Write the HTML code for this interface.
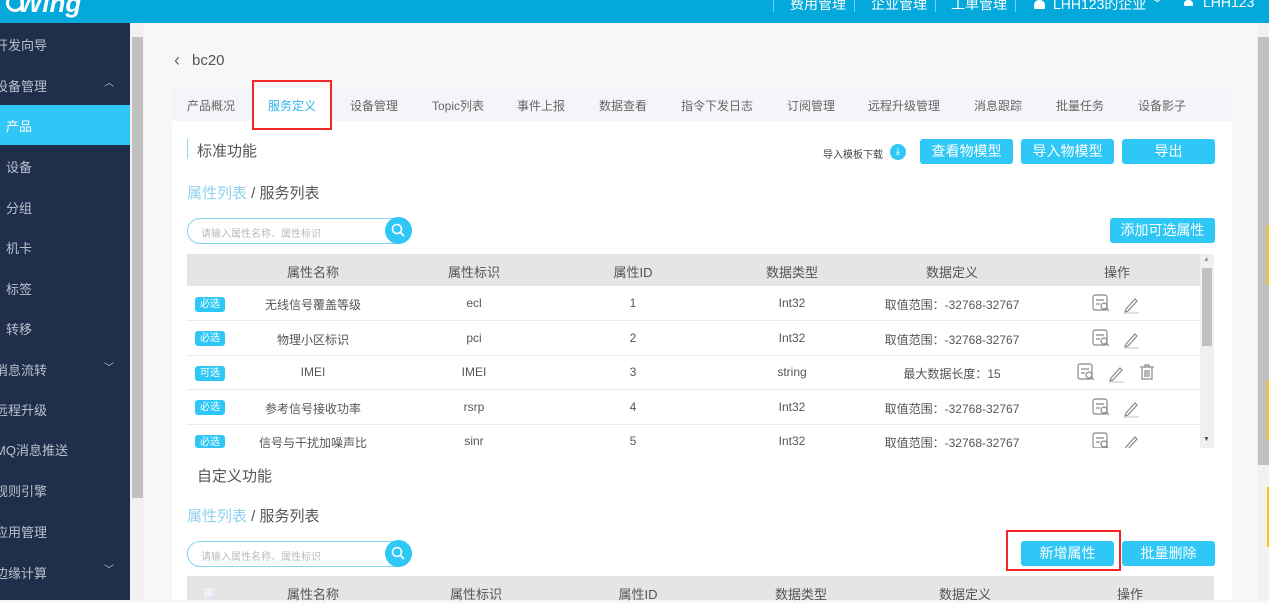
<!DOCTYPE html><html><head><meta charset="utf-8"><style>
*{margin:0;padding:0;box-sizing:border-box}
body{width:1269px;height:600px;overflow:hidden;position:relative;background:#f7f7f7;font-family:"Liberation Sans","Noto Sans CJK SC",sans-serif;color:#555;font-size:13px}
.a{position:absolute}
.hdr{left:0;top:0;width:1269px;height:23px;background:#04a9dc}
.hn{top:-6px;color:#fff;font-size:14px;white-space:nowrap}
.sep{top:0;width:1px;height:12px;background:#6fd0ee}
.side{left:0;top:23px;width:130px;height:577px;background:#1f2e4a}
.si{color:#b8c0cc;font-size:13px;white-space:nowrap}
.btn{background:#2fc7f5;color:#fff;border-radius:3px;text-align:center;font-size:14px}
.tc{text-align:center;white-space:nowrap;transform:translateX(-50%)}
.badge{background:#2fc7f5;color:#fff;font-size:10px;border-radius:3px;width:30px;height:15px;line-height:15px;text-align:center}
.row{left:187px;width:1013px;height:1px;background:#e8ebf0}
.red{border:2px solid #f0282a}
</style></head><body>
<div class="a hdr"></div>
<div class="a" style="left:18px;top:-12px;color:#fff;font-size:26px;font-style:italic;font-weight:bold">Wing</div>
<div class="a" style="left:6px;top:-6px;width:18px;height:18px;border:3px solid #fff;border-top-color:transparent;border-radius:50%"></div>
<div class="a sep" style="left:773px"></div><div class="a hn" style="left:790px">费用管理</div>
<div class="a sep" style="left:854px"></div><div class="a hn" style="left:871px">企业管理</div>
<div class="a sep" style="left:935px"></div><div class="a hn" style="left:951px">工单管理</div>
<div class="a sep" style="left:1015px"></div>
<div class="a" style="left:1034px;top:0;width:11px;height:9px;background:#fff;border-radius:5px 5px 1px 1px"></div>
<div class="a hn" style="left:1053px">LHH123的企业 ﹀</div>
<div class="a" style="left:1184px;top:0;width:9px;height:6px;background:#fff;border-radius:4px 4px 1px 1px"></div>
<div class="a hn" style="left:1203px">LHH123</div>

<div class="a side"></div>
<div class="a si" style="left:-5px;top:35px">开发向导</div>
<div class="a si" style="left:-5px;top:76px">设备管理</div><div class="a si" style="left:104px;top:74px;font-size:10px">︿</div>
<div class="a" style="left:0;top:105px;width:130px;height:40px;background:#2fc7f5"></div>
<div class="a" style="left:6px;top:116px;color:#fff">产品</div>
<div class="a si" style="left:6px;top:157px">设备</div>
<div class="a si" style="left:6px;top:198px">分组</div>
<div class="a si" style="left:6px;top:238px">机卡</div>
<div class="a si" style="left:6px;top:279px">标签</div>
<div class="a si" style="left:6px;top:319px">转移</div>
<div class="a si" style="left:-5px;top:360px">消息流转</div><div class="a si" style="left:104px;top:359px;font-size:10px">﹀</div>
<div class="a si" style="left:-5px;top:400px">远程升级</div>
<div class="a si" style="left:-5px;top:440px">MQ消息推送</div>
<div class="a si" style="left:-5px;top:481px">规则引擎</div>
<div class="a si" style="left:-5px;top:522px">应用管理</div>
<div class="a si" style="left:-5px;top:563px">边缘计算</div><div class="a si" style="left:104px;top:561px;font-size:10px">﹀</div>
<div class="a" style="left:130px;top:23px;width:14px;height:577px;background:#f1f1f1"></div>
<div class="a" style="left:132px;top:37px;width:11px;height:461px;background:#c1c1c1"></div>
<div class="a" style="left:1257px;top:23px;width:12px;height:577px;background:#f1f1f1"></div>
<div class="a" style="left:1258px;top:37px;width:11px;height:428px;background:#c1c1c1"></div>
<div class="a" style="left:1267px;top:225px;width:2px;height:60px;background:#f5c518"></div>
<div class="a" style="left:1267px;top:380px;width:2px;height:60px;background:#f5c518"></div>
<div class="a" style="left:1267px;top:487px;width:2px;height:60px;background:#f5c518"></div>

<div class="a" style="left:174px;top:50px;font-size:18px;color:#666">‹</div>
<div class="a" style="left:192px;top:52px;font-size:15px;color:#555">bc20</div>
<div class="a" style="left:172px;top:88px;width:1060px;height:33px;background:#f4f5f8"></div>
<div class="a" style="left:172px;top:121px;width:1060px;height:479px;background:#fff"></div>
<div class="a" style="left:253px;top:88px;width:78px;height:33px;background:#fff"></div>
<div class="a red" style="left:252px;top:80px;width:80px;height:50px"></div>
<div class="a" style="left:187px;top:97px;font-size:12px;color:#666">产品概况</div>
<div class="a" style="left:268px;top:97px;font-size:12px;color:#2fb4ec">服务定义</div>
<div class="a" style="left:350px;top:97px;font-size:12px;color:#666">设备管理</div>
<div class="a" style="left:432px;top:97px;font-size:12px;color:#666">Topic列表</div>
<div class="a" style="left:517px;top:97px;font-size:12px;color:#666">事件上报</div>
<div class="a" style="left:599px;top:97px;font-size:12px;color:#666">数据查看</div>
<div class="a" style="left:681px;top:97px;font-size:12px;color:#666">指令下发日志</div>
<div class="a" style="left:787px;top:97px;font-size:12px;color:#666">订阅管理</div>
<div class="a" style="left:868px;top:97px;font-size:12px;color:#666">远程升级管理</div>
<div class="a" style="left:974px;top:97px;font-size:12px;color:#666">消息跟踪</div>
<div class="a" style="left:1056px;top:97px;font-size:12px;color:#666">批量任务</div>
<div class="a" style="left:1138px;top:97px;font-size:12px;color:#666">设备影子</div>

<div class="a" style="left:187px;top:139px;width:1px;height:20px;background:#8fd6f3"></div>
<div class="a" style="left:197px;top:140px;font-size:15px;color:#555">标准功能</div>
<div class="a" style="left:823px;top:146px;font-size:10px;color:#444">导入模板下载</div>
<div class="a" style="left:890px;top:144px;width:16px;height:16px;border-radius:50%;background:#2fc7f5;color:#fff;font-size:10px;text-align:center;line-height:16px">⤓</div>
<div class="a btn" style="left:920px;top:139px;width:93px;height:25px;line-height:25px">查看物模型</div>
<div class="a btn" style="left:1021px;top:139px;width:93px;height:25px;line-height:25px">导入物模型</div>
<div class="a btn" style="left:1122px;top:139px;width:93px;height:25px;line-height:25px">导出</div>
<div class="a" style="left:187px;top:182px;font-size:15px"><span style="color:#8fd0ef">属性列表</span> / 服务列表</div>
<div class="a" style="left:187px;top:218px;width:222px;height:26px;border:1px solid #7fd4f3;border-radius:13px"></div>
<div class="a" style="left:201px;top:225px;font-size:10px;color:#bbb">请输入属性名称、属性标识</div>
<div class="a" style="left:385px;top:217px;width:27px;height:27px;border-radius:50%;background:#2fc7f5"></div>
<svg class="a" style="left:391px;top:223px" width="15" height="15"><circle cx="6" cy="6" r="4.5" fill="none" stroke="#fff" stroke-width="1.6"/><path d="M9.5 9.5L13 13" stroke="#fff" stroke-width="1.8"/></svg>
<div class="a btn" style="left:1110px;top:218px;width:105px;height:25px;line-height:25px">添加可选属性</div>

<div class="a" style="left:187px;top:254px;width:1013px;height:32px;background:#e5e5e5"></div>
<div class="a" style="left:1200px;top:254px;width:14px;height:194px;background:#f0f0f0"></div>
<div class="a" style="left:1202px;top:268px;width:10px;height:78px;background:#c1c1c1"></div>
<div class="a" style="left:1203px;top:256px;font-size:7px;color:#999">▲</div>
<div class="a" style="left:1203px;top:436px;font-size:7px;color:#555">▼</div>
<div class="a tc" style="left:313px;top:262px">属性名称</div><div class="a tc" style="left:474px;top:262px">属性标识</div><div class="a tc" style="left:633px;top:262px">属性ID</div><div class="a tc" style="left:792px;top:262px">数据类型</div><div class="a tc" style="left:952px;top:262px">数据定义</div><div class="a tc" style="left:1117px;top:262px">操作</div>
<div class="a row" style="top:320px"></div><div class="a row" style="top:355px"></div><div class="a row" style="top:389px"></div><div class="a row" style="top:424px"></div>

<div class="a badge" style="left:195px;top:297px">必选</div><div class="a tc" style="left:313px;top:296px;font-size:12px">无线信号覆盖等级</div><div class="a tc" style="left:474px;top:296px;font-size:12px">ecl</div><div class="a tc" style="left:633px;top:296px;font-size:12px">1</div><div class="a tc" style="left:792px;top:296px;font-size:12px">Int32</div><div class="a tc" style="left:952px;top:296px;font-size:12px">取值范围：-32768-32767</div>
<div class="a badge" style="left:195px;top:331px">必选</div><div class="a tc" style="left:313px;top:331px;font-size:12px">物理小区标识</div><div class="a tc" style="left:474px;top:331px;font-size:12px">pci</div><div class="a tc" style="left:633px;top:331px;font-size:12px">2</div><div class="a tc" style="left:792px;top:331px;font-size:12px">Int32</div><div class="a tc" style="left:952px;top:331px;font-size:12px">取值范围：-32768-32767</div>
<div class="a badge" style="left:195px;top:366px">可选</div><div class="a tc" style="left:313px;top:365px;font-size:12px">IMEI</div><div class="a tc" style="left:474px;top:365px;font-size:12px">IMEI</div><div class="a tc" style="left:633px;top:365px;font-size:12px">3</div><div class="a tc" style="left:792px;top:365px;font-size:12px">string</div><div class="a tc" style="left:952px;top:365px;font-size:12px">最大数据长度：15</div>
<div class="a badge" style="left:195px;top:400px">必选</div><div class="a tc" style="left:313px;top:400px;font-size:12px">参考信号接收功率</div><div class="a tc" style="left:474px;top:400px;font-size:12px">rsrp</div><div class="a tc" style="left:633px;top:400px;font-size:12px">4</div><div class="a tc" style="left:792px;top:400px;font-size:12px">Int32</div><div class="a tc" style="left:952px;top:400px;font-size:12px">取值范围：-32768-32767</div>
<div class="a badge" style="left:195px;top:435px;height:13px;overflow:hidden">必选</div><div class="a tc" style="left:313px;top:434px;font-size:12px">信号与干扰加噪声比</div><div class="a tc" style="left:474px;top:434px;font-size:12px">sinr</div><div class="a tc" style="left:633px;top:434px;font-size:12px">5</div><div class="a tc" style="left:792px;top:434px;font-size:12px">Int32</div><div class="a tc" style="left:952px;top:434px;font-size:12px">取值范围：-32768-32767</div>

<svg class="a" style="left:0;top:0" width="1269" height="600" fill="none" stroke="#888" stroke-width="1.2">
<g id="v"><rect x="1093" y="295" width="14" height="15" rx="2"/><path d="M1096 300h8M1096 304h4"/><circle cx="1104" cy="306" r="3"/><path d="M1106 308l3 3"/><path d="M1126 309l9-10 2 2-9 10-3 1z"/><path d="M1124 313h15" stroke="#ccc"/></g>
<use href="#v" y="35"/><use href="#v" x="-15" y="69"/><use href="#v" y="104"/><use href="#v" y="138"/>
<path d="M1140 367h14M1145 367v-2h4v2M1142 368v11h10v-11M1145 370v7M1147 370v7M1149 370v7"/>
</svg>
<div class="a" style="left:187px;top:448px;width:1013px;height:10px;background:#fff"></div>

<div class="a" style="left:197px;top:465px;font-size:15px;color:#555">自定义功能</div>
<div class="a" style="left:187px;top:505px;font-size:15px"><span style="color:#8fd0ef">属性列表</span> / 服务列表</div>
<div class="a" style="left:187px;top:541px;width:222px;height:26px;border:1px solid #7fd4f3;border-radius:13px"></div>
<div class="a" style="left:201px;top:548px;font-size:10px;color:#bbb">请输入属性名称、属性标识</div>
<div class="a" style="left:385px;top:540px;width:27px;height:27px;border-radius:50%;background:#2fc7f5"></div>
<svg class="a" style="left:391px;top:546px" width="15" height="15"><circle cx="6" cy="6" r="4.5" fill="none" stroke="#fff" stroke-width="1.6"/><path d="M9.5 9.5L13 13" stroke="#fff" stroke-width="1.8"/></svg>
<div class="a red" style="left:1006px;top:530px;width:115px;height:41px"></div>
<div class="a btn" style="left:1021px;top:541px;width:93px;height:25px;line-height:25px">新增属性</div>
<div class="a btn" style="left:1122px;top:541px;width:93px;height:25px;line-height:25px">批量删除</div>
<div class="a" style="left:187px;top:576px;width:1027px;height:24px;background:#e5e5e5"></div>
<div class="a" style="left:203px;top:587px;width:11px;height:11px;background:#eef1f8;border:1px solid #dde"></div>
<div class="a tc" style="left:313px;top:584px">属性名称</div><div class="a tc" style="left:476px;top:584px">属性标识</div><div class="a tc" style="left:638px;top:584px">属性ID</div><div class="a tc" style="left:801px;top:584px">数据类型</div><div class="a tc" style="left:965px;top:584px">数据定义</div><div class="a tc" style="left:1130px;top:584px">操作</div>
</body></html>
